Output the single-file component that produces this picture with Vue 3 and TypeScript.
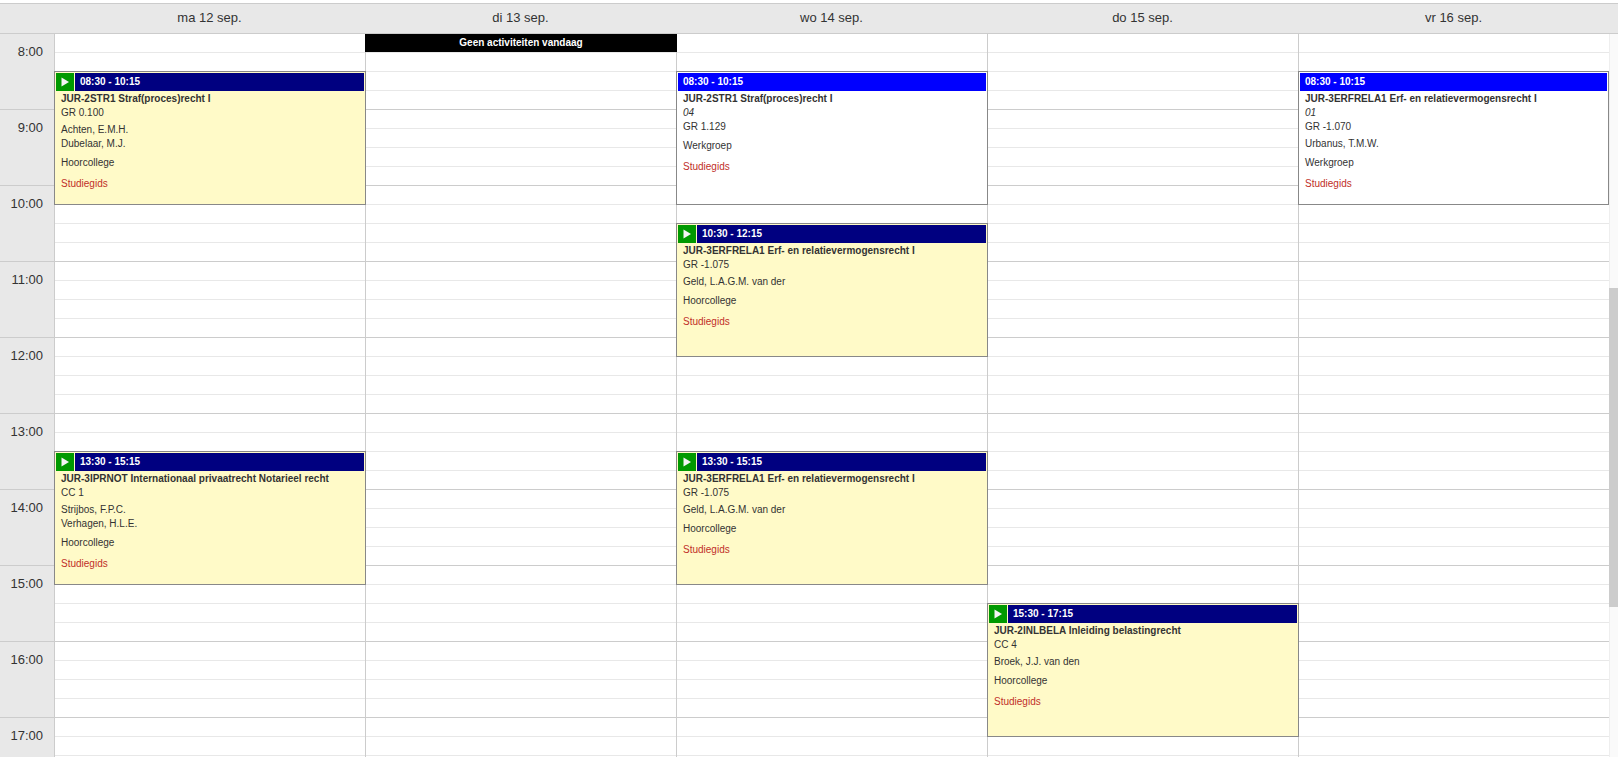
<script setup lang="ts">
interface Activity {
  start: number
  time: string
  title: string
  group?: string
  room: string
  teachers: string[]
  kind: string
  lecture: boolean
}
interface Day {
  label: string
  empty?: boolean
  activities: Activity[]
}

const hours = Array.from({ length: 10 }, (_, i) => `${8 + i}:00`)
const quarterRows = Array.from({ length: 40 }, (_, i) => i)

const days: Day[] = [
  {
    label: 'ma 12 sep.',
    activities: [
      { start: 2, time: '08:30 - 10:15', title: 'JUR-2STR1 Straf(proces)recht I', room: 'GR 0.100', teachers: ['Achten, E.M.H.', 'Dubelaar, M.J.'], kind: 'Hoorcollege', lecture: true },
      { start: 22, time: '13:30 - 15:15', title: 'JUR-3IPRNOT Internationaal privaatrecht Notarieel recht', room: 'CC 1', teachers: ['Strijbos, F.P.C.', 'Verhagen, H.L.E.'], kind: 'Hoorcollege', lecture: true }
    ]
  },
  { label: 'di 13 sep.', empty: true, activities: [] },
  {
    label: 'wo 14 sep.',
    activities: [
      { start: 2, time: '08:30 - 10:15', title: 'JUR-2STR1 Straf(proces)recht I', group: '04', room: 'GR 1.129', teachers: [], kind: 'Werkgroep', lecture: false },
      { start: 10, time: '10:30 - 12:15', title: 'JUR-3ERFRELA1 Erf- en relatievermogensrecht I', room: 'GR -1.075', teachers: ['Geld, L.A.G.M. van der'], kind: 'Hoorcollege', lecture: true },
      { start: 22, time: '13:30 - 15:15', title: 'JUR-3ERFRELA1 Erf- en relatievermogensrecht I', room: 'GR -1.075', teachers: ['Geld, L.A.G.M. van der'], kind: 'Hoorcollege', lecture: true }
    ]
  },
  {
    label: 'do 15 sep.',
    activities: [
      { start: 30, time: '15:30 - 17:15', title: 'JUR-2INLBELA Inleiding belastingrecht', room: 'CC 4', teachers: ['Broek, J.J. van den'], kind: 'Hoorcollege', lecture: true }
    ]
  },
  {
    label: 'vr 16 sep.',
    activities: [
      { start: 2, time: '08:30 - 10:15', title: 'JUR-3ERFRELA1 Erf- en relatievermogensrecht I', group: '01', room: 'GR -1.070', teachers: ['Urbanus, T.M.W.'], kind: 'Werkgroep', lecture: false }
    ]
  }
]

const QUARTER = 19
function topOf(a: Activity): string {
  return `${a.start * QUARTER - 1}px`
}
</script>

<template>
  <div class="page">
    <div class="calendar">
      <header class="head">
        <div class="corner"></div>
        <div v-for="d in days" :key="d.label" class="head-cell">{{ d.label }}</div>
        <div class="head-gap"></div>
      </header>
      <div class="body">
        <div class="times">
          <div v-for="h in hours" :key="h" class="hour">{{ h }}</div>
        </div>
        <div v-for="d in days" :key="d.label" class="day">
          <div
            v-for="q in quarterRows"
            :key="q"
            class="quarter"
            :class="{ 'quarter-hour': q % 4 === 3 }"
          ></div>
          <div v-if="d.empty" class="no-activity">Geen activiteiten vandaag</div>
          <article
            v-for="a in d.activities"
            :key="a.time"
            class="activity"
            :class="a.lecture ? 'lecture' : 'seminar'"
            :style="{ top: topOf(a) }"
          >
            <div class="bar">
              <span v-if="a.lecture" class="play">
                <svg width="10" height="10" viewBox="0 0 10 10"><path d="M1.5 0.5 L9 5 L1.5 9.5 Z" fill="#f4f4f4" /></svg>
              </span>
              <span class="time">{{ a.time }}</span>
            </div>
            <div class="info">
              <div class="title">{{ a.title }}</div>
              <div v-if="a.group" class="group">{{ a.group }}</div>
              <div class="line">{{ a.room }}</div>
              <div class="teachers">
                <div v-for="t in a.teachers" :key="t" class="line">{{ t }}</div>
              </div>
              <div class="line kind">{{ a.kind }}</div>
              <a class="line guide">Studiegids</a>
            </div>
          </article>
        </div>
        <div class="scrollbar"><div class="thumb"></div></div>
      </div>
    </div>
  </div>
</template>

<style>
html,
body {
  margin: 0;
  padding: 0;
  background: #fff;
  overflow: hidden;
}
</style>

<style scoped>
.page {
  height: 757px;
  overflow: hidden;
  padding-top: 3px;
  box-sizing: border-box;
  font-family: "Liberation Sans", Arial, sans-serif;
  color: #333;
}
.calendar {
  display: flex;
  flex-direction: column;
  height: 754px;
  overflow: hidden;
}
.head {
  display: flex;
  flex: none;
  height: 29px;
  background: #e8e8e8;
  border-top: 1px solid #ccc;
  border-bottom: 1px solid #ccc;
}
.corner {
  flex: none;
  width: 54px;
}
.head-cell {
  flex: none;
  width: 311px;
  text-align: center;
  font-size: 13px;
  line-height: 28px;
}
.head-gap {
  flex: 1;
}
.body {
  display: flex;
  flex: 1;
  min-height: 0;
  overflow: hidden;
}
.times {
  flex: none;
  width: 54px;
  background: #e8e8e8;
  border-right: 1px solid #ccc;
}
.hour {
  box-sizing: border-box;
  height: 76px;
  padding: 10px 11px 0 0;
  text-align: right;
  font-size: 13px;
  line-height: 16px;
  border-bottom: 1px solid #ccc;
}
.day {
  position: relative;
  flex: none;
  box-sizing: border-box;
  width: 311px;
  border-right: 1px solid #ccc;
}
.day:nth-last-child(2) {
  width: 310px;
  border-right: 0;
}
.day:nth-last-child(2) .activity {
  width: 311px;
}
.quarter {
  box-sizing: border-box;
  height: 19px;
  border-bottom: 1px solid #e8e8e8;
}
.quarter-hour {
  border-bottom-color: #ccc;
}
.no-activity {
  position: absolute;
  top: 0;
  left: -1px;
  width: 312px;
  height: 18px;
  background: #000;
  color: #fff;
  font-size: 10px;
  font-weight: bold;
  line-height: 18px;
  text-align: center;
}
.activity {
  position: absolute;
  left: -1px;
  width: 312px;
  height: 134px;
  box-sizing: border-box;
  border: 1px solid #888;
  padding: 1px;
  font-size: 10px;
  overflow: hidden;
}
.lecture {
  background: #fffac8;
}
.seminar {
  background: #fff;
}
.bar {
  display: flex;
  height: 18px;
}
.play {
  display: flex;
  flex: none;
  align-items: center;
  justify-content: center;
  width: 18px;
  height: 18px;
  margin-right: 1px;
  background: #009900;
}
.time {
  flex: 1;
  padding-left: 5px;
  font-size: 10px;
  font-weight: bold;
  line-height: 18px;
  color: #fff;
}
.lecture .time {
  background: #000080;
}
.seminar .time {
  background: #0000ff;
}
.info {
  padding: 1px 5px 0;
}
.title {
  font-size: 10px;
  font-weight: bold;
  line-height: 14px;
  white-space: nowrap;
}
.group {
  font-style: italic;
  line-height: 14px;
}
.line {
  display: block;
  line-height: 14px;
}
.teachers {
  margin-top: 3px;
}
.kind {
  margin-top: 5px;
}
.guide {
  margin-top: 7px;
  color: #bf2f28;
}
.scrollbar {
  flex: 1;
  position: relative;
  background: #fafafa;
  border-left: 1px solid #eee;
}
.thumb {
  position: absolute;
  top: 254px;
  left: -1px;
  right: 0;
  height: 319px;
  background: #ccc;
}
</style>
